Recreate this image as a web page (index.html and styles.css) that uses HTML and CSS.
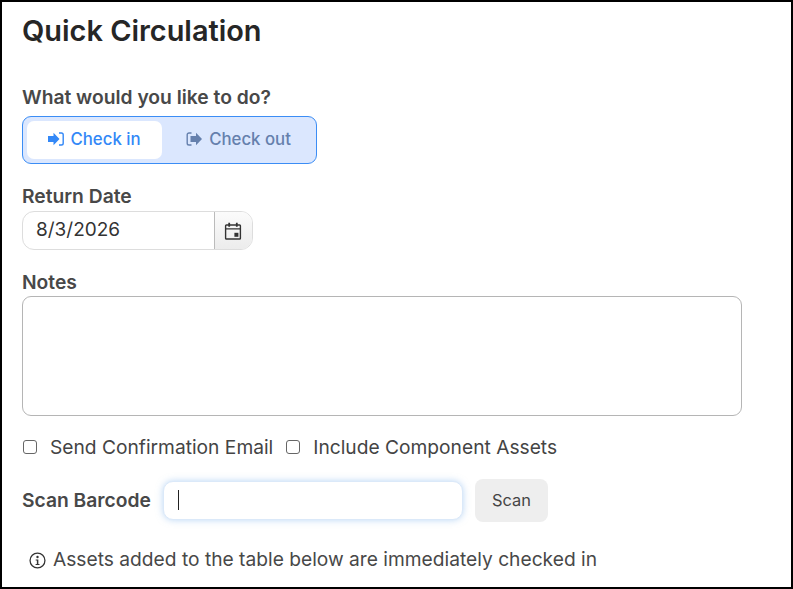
FILE: index.html
```html
<!DOCTYPE html>
<html lang="en">
<head>
<meta charset="utf-8">
<title>Quick Circulation</title>
<link rel="stylesheet" href="styles.css">
</head>
<body>
<main class="frame">
  <h1 class="title">Quick Circulation</h1>
  <div class="label prompt">What would you like to do?</div>
  <div class="segmented">
    <button class="seg seg-active">
      <svg class="seg-icon" viewBox="0 0 16 14"><path d="M0 4h5.500V.8L11.500 7l-6 6.200V10H0z" fill="currentColor"/><path d="M11 1h2.400a1.800 1.800 0 0 1 1.800 1.800v8.400a1.800 1.800 0 0 1-1.800 1.800H11" fill="none" stroke="currentColor" stroke-width="1.400"/></svg>
      Check in
    </button>
    <button class="seg seg-out">
      <svg class="seg-icon" viewBox="0 0 16 14"><path d="M4.500 4h5.500V.8L16 7l-6 6.200V10H4.500z" fill="currentColor"/><path d="M5.500 1H3a1.800 1.800 0 0 0-1.800 1.800v8.400A1.800 1.800 0 0 0 3 13h2.500" fill="none" stroke="currentColor" stroke-width="1.400"/></svg>
      Check out
    </button>
  </div>
  <label class="label date-label">Return Date</label>
  <div class="date-group">
    <div class="date-value">8/3/2026</div>
    <div class="date-btn">
      <svg class="cal" viewBox="0 0 18 18"><rect x="1.600" y="3" width="14.800" height="14" rx="0.800" fill="none" stroke="#333" stroke-width="1.400"/><path d="M1.600 6.900h14.800" stroke="#333" stroke-width="1.400"/><path d="M5.200 0.800v4M12.800 0.800v4" stroke="#333" stroke-width="1.800"/><rect x="10.400" y="10.800" width="4" height="4" fill="#333"/></svg>
    </div>
  </div>
  <label class="label notes-label">Notes</label>
  <div class="notes"></div>
  <div class="checks">
    <span class="box"></span><span class="check-text">Send Confirmation Email</span>
    <span class="box box-second"></span><span class="check-text">Include Component Assets</span>
  </div>
  <div class="scan-row">
    <span class="label scan-label">Scan Barcode</span>
    <div class="scan-input"><span class="caret"></span></div>
    <button class="scan-btn">Scan</button>
  </div>
  <div class="info">
    <svg class="info-icon" viewBox="0 0 16 16"><circle cx="8" cy="8" r="7" fill="none" stroke="#333" stroke-width="1.200"/><circle cx="8" cy="4.700" r="1.100" fill="#333"/><path d="M6.300 7h2.500v4.300h1.100v1H6.200v-1h1.200V8H6.300z" fill="#333"/></svg>
    <span>Assets added to the table below are immediately checked in</span>
  </div>
</main>
</body>
</html>
```
FILE: styles.css
```css
* { box-sizing: border-box; }
html, body { margin: 0; padding: 0; }
body { font-family: Inter, "Liberation Sans", sans-serif; color: #3d3d3d; background: #fff; }
.frame { width: 793px; height: 589px; border: 2px solid #000; padding: 0 0 0 20px; overflow: hidden; }
.title { margin: 12px 0 0; font-size: 28.900px; line-height: 34px; font-weight: 600; color: #262626; }
.label { display: block; font-size: 19.250px; line-height: 22px; font-weight: 600; color: #484848; }
.prompt { margin-top: 38px; }
.segmented { display: flex; width: 295px; height: 48px; margin-top: 8px; padding: 4px; background: #dbe7fe; border: 1px solid #3b8df5; border-radius: 9px; }
.seg { flex: 1; display: flex; align-items: center; justify-content: center; gap: 7px; border: 0; background: transparent; border-radius: 7px; font: 500 16.800px Inter, sans-serif; color: #6580ad; padding: 0 0 2px; }
.seg-out { padding-left: 3px; }
.seg-active { flex: 0 0 135px; background: #fff; color: #3388f7; gap: 6px; }
.seg-icon { width: 16px; height: 14px; }
.date-label { margin-top: 21px; }
.date-group { display: flex; width: 231px; height: 39px; margin-top: 4px; border: 1px solid #ddd; border-radius: 12px; overflow: hidden; }
.date-value { flex: 1; padding-left: 13px; font-size: 19px; line-height: 36px; color: #333; }
.date-btn { width: 38px; padding-right: 2px; display: flex; align-items: center; justify-content: center; border-left: 1px solid #bbb; background: linear-gradient(#fbfbfb, #ececec); }
.cal { width: 18px; height: 18px; }
.notes-label { margin-top: 21px; }
.notes { width: 720px; height: 120px; margin-top: 3px; border: 1px solid #b5b5b5; border-radius: 9px; }
.checks { display: flex; align-items: center; height: 24px; margin-top: 19px; font-size: 19.200px; color: #444; }
.box { width: 14px; height: 14px; border: 1px solid #666; border-radius: 3px; background: #fff; margin-left: 1px; }
.check-text { margin-left: 13px; }
.box-second { margin-left: 13px; }
.scan-row { display: flex; align-items: center; margin-top: 19px; height: 44px; }
.scan-input { width: 300px; height: 39px; margin-left: 12px; padding-left: 14px; display: flex; align-items: center; border-radius: 10px; border: 1px solid #dbe9f9; background: #fff; box-shadow: 0 0 7px rgba(120,175,235,.5); }
.caret { width: 1px; height: 20px; background: #222; }
.scan-btn { width: 73px; height: 43px; margin-left: 12px; border: 0; border-radius: 8px; background: #eee; font: 400 16.400px Inter, sans-serif; color: #444; padding: 0; }
.info { display: flex; align-items: center; gap: 7px; margin: 25px 0 0 7px; font-size: 19.200px; line-height: 24px; color: #484848; }
.info-icon { width: 17px; height: 17px; margin-top: 2px; }
```
